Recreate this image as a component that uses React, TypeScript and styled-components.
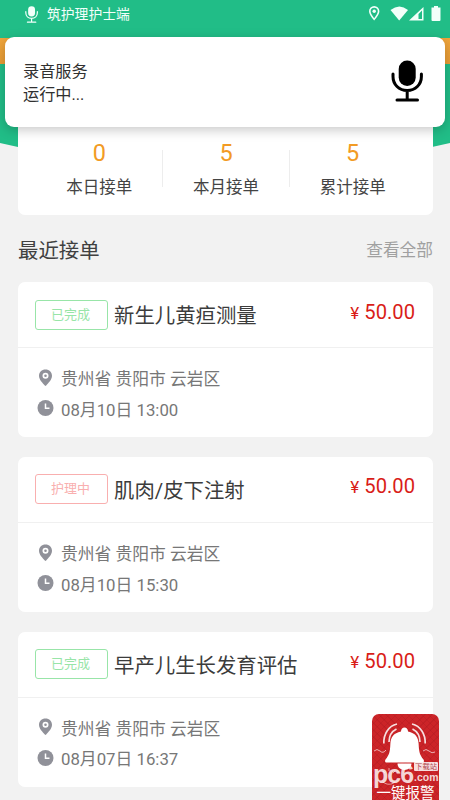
import React from "react";
import styled, { createGlobalStyle } from "styled-components";

const GlobalStyle = createGlobalStyle`
  * { box-sizing: border-box; }
  body {
    margin: 0;
    background: #f2f2f2;
    font-family: Roboto, "Noto Sans CJK SC", sans-serif;
    color: #333;
  }
`;

const Screen = styled.div`
  position: relative;
  width: 450px;
  height: 800px;
  overflow: hidden;
  background: #f2f2f2;
`;

const Hero = styled.div`
  position: absolute;
  inset: 0 0 auto 0;
  height: 152px;
  background: linear-gradient(#f0a53b, #e89c35) 0 38px / 100% 26px no-repeat,
    #21bd87;
  clip-path: polygon(0 0, 100% 0, 100% 143px, 96% 147px, 80% 152px, 20% 152px, 4% 147px, 0 143px);
`;

const StatusBar = styled.header`
  position: relative;
  display: flex;
  align-items: center;
  height: 28px;
  padding: 0 9px 0 25px;
  color: #f2fffa;
`;

const AppName = styled.span`
  flex: 1;
  margin-left: 9px;
  font-size: 13.8px;
  line-height: 28px;
`;

const StatusIcons = styled.div`
  display: flex;
  align-items: center;
  svg { display: block; }
`;

const Toast = styled.aside`
  position: absolute;
  z-index: 2;
  top: 37px;
  left: 5px;
  width: 440px;
  height: 90px;
  padding: 0 22px 0 18px;
  display: flex;
  align-items: center;
  justify-content: space-between;
  border-radius: 9px;
  background: #fff;
  box-shadow: 0 3px 12px rgba(0, 0, 0, 0.22);
  > svg { margin-top: -3px; color: #000; }
`;

const ToastText = styled.p`
  margin: 3px 0 0;
  font-size: 16.2px;
  line-height: 22.5px;
  color: #303030;
`;

const Content = styled.main`
  position: relative;
  padding: 0 17px 0 18px;
`;

const Stats = styled.section`
  display: flex;
  height: 145px;
  margin-top: 42px;
  padding: 69px 17px 0 18px;
  border-radius: 7px;
  background: #fff;
`;

const Stat = styled.div`
  flex: 1;
  text-align: center;
`;

const Divider = styled.i`
  width: 1px;
  height: 37px;
  margin: 11px -0.5px 0;
  background: #ededed;
`;

const StatValue = styled.div`
  font-size: 23.5px;
  line-height: 28px;
  color: #f29b24;
`;

const StatLabel = styled.div`
  margin-top: 9px;
  font-size: 16.5px;
  line-height: 24px;
  color: #444;
`;

const SectionHead = styled.div`
  display: flex;
  align-items: center;
  justify-content: space-between;
  height: 67px;
  padding-top: 1px;
`;

const SectionTitle = styled.h2`
  margin: 0;
  font-size: 20.4px;
  font-weight: 400;
  color: #404040;
`;

const More = styled.a`
  font-size: 16.7px;
  color: #a0a0a0;
`;

const Orders = styled.div`
  display: grid;
  gap: 19.4px;
`;

const Card = styled.article`
  height: 155.4px;
  border-radius: 7px;
  background: #fff;
`;

const CardHead = styled.div`
  display: flex;
  align-items: center;
  height: 66px;
  padding: 0 18px 0 17px;
  border-bottom: 1px solid #f0f0f0;
`;

const Badge = styled.span<{ $active?: boolean }>`
  width: 73px;
  height: 30px;
  line-height: 27px;
  text-align: center;
  font-size: 13px;
  border: 1px solid currentColor;
  border-radius: 3px;
  padding-right: 2px;
  color: ${(p) => (p.$active ? "#f9afaf" : "#98e5a8")};
`;

const Title = styled.h3`
  flex: 1;
  margin: 0 0 1px 6px;
  font-size: 20.4px;
  font-weight: 400;
  color: #3c3c3c;
`;

const Price = styled.div`
  margin-top: -6px;
  font-size: 20.2px;
  color: #d91d18;
`;

const Yen = styled.span`
  margin-right: 5px;
  font-size: 17px;
`;

const Details = styled.div`
  display: grid;
  grid-auto-rows: 30.5px;
  padding: 15px 18px 0;
`;

const Detail = styled.div`
  display: flex;
  align-items: center;
  font-size: 16.8px;
  color: #777;
  svg { width: 18px; height: 18px; margin: -1px 7px 0 0; flex: none; }
`;

const Alarm = styled.button`
  position: absolute;
  z-index: 3;
  left: 372px;
  top: 714px;
  width: 67px;
  height: 86px;
  padding: 70px 0 0;
  border: 0;
  border-radius: 7px 7px 0 0;
  overflow: hidden;
  color: #fff;
  font: 14.5px/16px "Noto Sans CJK SC", sans-serif;
  white-space: nowrap;
  background: repeating-linear-gradient(45deg, #98131c33 0 1px, transparent 1px 5px),
    repeating-linear-gradient(-45deg, #98131c33 0 1px, transparent 1px 5px), #cc2428;
  > svg { position: absolute; inset: 0; }
`;

const Watermark = styled.span`
  position: absolute;
  z-index: 4;
  left: 373px;
  top: 759px;
  display: flex;
  align-items: center;
  color: rgba(255, 255, 255, 0.82);
  font-family: "Liberation Sans", sans-serif;
`;

const WatermarkName = styled.b`
  font-size: 25px;
  line-height: 30px;
  letter-spacing: -1px;
`;

const WatermarkSide = styled.span`
  display: grid;
  margin: 0 0 4px 1px;
  font: bold 10.5px/12px "Liberation Sans", sans-serif;
`;

const WatermarkTag = styled.span`
  width: 24px;
  padding-left: 1px;
  border-radius: 1px;
  background: rgba(255, 255, 255, 0.85);
  color: #b0484e;
  font: 7.3px/9px "Noto Sans CJK SC", sans-serif;
  white-space: nowrap;
`;

const Mic = ({ width, height }: { width: number; height: number }) => (
  <svg width={width} height={height} viewBox="0 0 32 42" fill="none" stroke="currentColor" strokeWidth="3" strokeLinecap="round" preserveAspectRatio="none">
    <rect x="7.700" y="0.5" width="17" height="25.500" rx="8.500" fill="currentColor" stroke="none" />
    <path d="M2 14v2.5c0 8 6 14 14.2 14s14.2-6 14.2-14V14M16.2 31v9M6 40h20.500" />
  </svg>
);

const PinIcon = () => (
  <svg viewBox="0 0 18 18">
    <path fill="#909199" fillRule="evenodd" d="M9.500 0.500C5.700 0.500 3 3.200 3 6.800c0 4 3.600 7.200 5.800 9.800q.7.800 1.400 0C12.400 14 16 10.800 16 6.800c0-3.600-2.700-6.300-6.500-6.300zm0 3.200a3 3 0 1 1 0 6 3 3 0 0 1 0-6zm0 1.700a1.300 1.300 0 1 0 0 2.600 1.300 1.300 0 0 0 0-2.600z" />
  </svg>
);

const ClockIcon = () => (
  <svg viewBox="0 0 18 18">
    <circle cx="9.500" cy="9" r="8" fill="#909199" />
    <path d="M9.500 4.500V9.300H13.500" fill="none" stroke="#fff" strokeWidth="1.500" />
  </svg>
);

const BellArt = () => (
  <svg width="67" height="86" viewBox="0 0 67 86" fill="none" stroke="#fff">
    <path fill="#fff" stroke="none" d="M29 17.500c-.3-5.500 7.300-5.500 7 0 7.500 1.500 10.300 6 10.600 12 .4 9 1.200 11.500 4.900 16 1 1.600.2 3-1.300 3H14.800c-1.500 0-2.300-1.400-1.300-3 3.700-4.500 4.500-7 4.900-16 .3-6 3.100-10.500 10.600-12zM25.500 49.500h14c0 8.500-14 8.500-14 0z" />
    <path d="M11.800 29.500C11.500 20 16.500 12 25 10M17 28c0-6 2.500-10.500 7.500-13M53.200 29.500C53.500 20 48.500 12 40 10M48 28c0-6-2.500-10.500-7.500-13" strokeWidth="1.700" opacity=".85" />
    <path d="M2 37q3-3 6 0t6-1M51 37q3-3 6 0t6 1" strokeWidth=".8" opacity=".8" />
    <path d="M11 57l2 2M17 54v3M23 57l-2 2M11 68c4 3 8 3 12 0" strokeWidth="1" opacity=".55" />
  </svg>
);

const stats = [
  { value: 0, label: "本日接单" },
  { value: 5, label: "本月接单" },
  { value: 5, label: "累计接单" },
];

const orders = [
  { status: "已完成", title: "新生儿黄疸测量", time: "08月10日 13:00" },
  { status: "护理中", title: "肌肉/皮下注射", time: "08月10日 15:30", active: true },
  { status: "已完成", title: "早产儿生长发育评估", time: "08月07日 16:37" },
];

export default function App() {
  return (
    <Screen>
      <GlobalStyle />
      <Hero />
      <StatusBar>
        <Mic width={13} height={17} />
        <AppName>筑护理护士端</AppName>
        <StatusIcons>
          <svg width="72" height="16" viewBox="0 0 72 16" fill="currentColor">
            <path fillRule="evenodd" d="M0 5.300a5 5 0 0 1 10.400 0c0 3.500-5.200 9.200-5.200 9.200S0 8.800 0 5.300zm1.600 0c0 2 2.100 5 3.600 7 1.500-2 3.600-5 3.600-7a3.600 3.600 0 0 0-7.200 0z" />
            <circle cx="5.200" cy="5.200" r="1.700" />
            <path d="M21.500 4q9-7.200 17.500 0L30.200 14.500z" />
            <path fillRule="evenodd" d="M54.500 1v13.500H40zM53 4.500l-3.500 3.600V13H53z" />
            <path d="M65 0h4v1.500h2.500V14q0 1-1 1h-7q-1 0-1-1V1.500H65z" />
          </svg>
        </StatusIcons>
      </StatusBar>
      <Toast>
        <ToastText>
          录音服务
          <br />
          运行中...
        </ToastText>
        <Mic width={32} height={42} />
      </Toast>
      <Content>
        <Stats>
          {stats.map((s, i) => (
            <React.Fragment key={s.label}>
              {i > 0 && <Divider />}
              <Stat>
                <StatValue>{s.value}</StatValue>
                <StatLabel>{s.label}</StatLabel>
              </Stat>
            </React.Fragment>
          ))}
        </Stats>
        <SectionHead>
          <SectionTitle>最近接单</SectionTitle>
          <More>查看全部</More>
        </SectionHead>
        <Orders>
          {orders.map((o) => (
            <Card key={o.time}>
              <CardHead>
                <Badge $active={o.active}>{o.status}</Badge>
                <Title>{o.title}</Title>
                <Price>
                  <Yen>¥</Yen>50.00
                </Price>
              </CardHead>
              <Details>
                <Detail>
                  <PinIcon />
                  贵州省 贵阳市 云岩区
                </Detail>
                <Detail>
                  <ClockIcon />
                  {o.time}
                </Detail>
              </Details>
            </Card>
          ))}
        </Orders>
      </Content>
      <Alarm>
        <BellArt />
        一键报警
      </Alarm>
      <Watermark>
        <WatermarkName>pc6</WatermarkName>
        <WatermarkSide>
          <WatermarkTag>下载站</WatermarkTag>
          .com
        </WatermarkSide>
      </Watermark>
    </Screen>
  );
}
